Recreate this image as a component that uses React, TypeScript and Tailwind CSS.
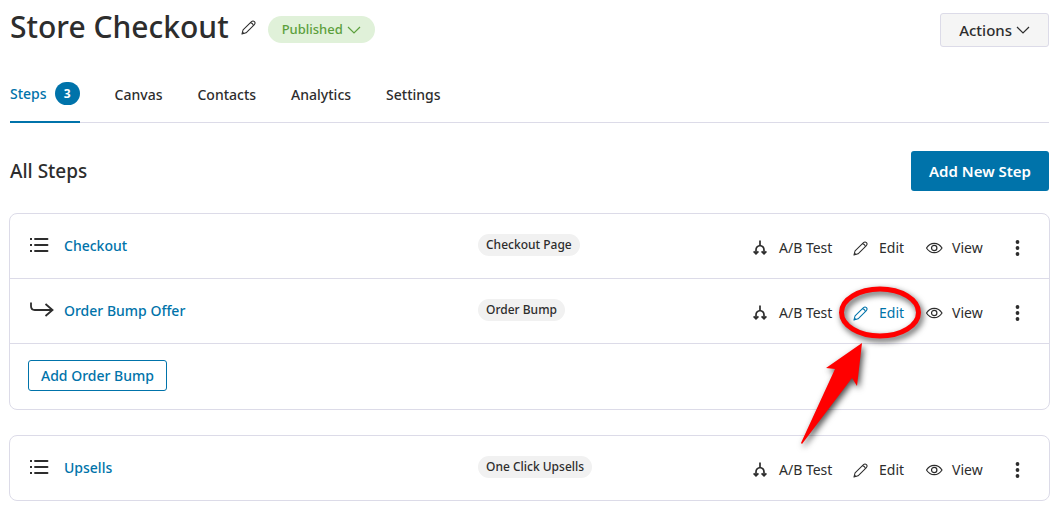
import { ReactNode } from "react";
import clsx from "clsx";

type Step = { name: string; badge: string; nested?: boolean };

const tabs = ["Canvas", "Contacts", "Analytics", "Settings"];

const checkoutSteps: Step[] = [
  { name: "Checkout", badge: "Checkout Page" },
  { name: "Order Bump Offer", badge: "Order Bump", nested: true },
];

const upsellSteps: Step[] = [{ name: "Upsells", badge: "One Click Upsells" }];

const PencilIcon = () => (
  <svg width="15" height="15" viewBox="0 0 16 16" fill="none" stroke="currentColor" strokeWidth="1.100" strokeLinejoin="round">
    <path d="M1 15 2.200 10.600 10.900 2C12 .9 13.300.7 14.300 1.700s.8 2.300-.3 3.400L5.400 13.700 1 15Z" />
    <path d="M10 2.900c1.700.1 2.900 1.200 3.200 3M1.600 13l1.700 1.500" />
  </svg>
);

const EyeIcon = () => (
  <svg width="17" height="12" viewBox="1 0 17 12" fill="none" stroke="currentColor" strokeWidth="1.200">
    <path d="M1.500 6C3.500 2.800 6 1.300 9.200 1.300S15 2.800 17 6c-2 3.200-4.600 4.700-7.800 4.700S3.500 9.200 1.500 6Z" />
    <circle cx="9.200" cy="6" r="2.700" />
  </svg>
);

const SplitIcon = () => (
  <svg width="14" height="16" viewBox="0 0 14 16" fill="none" stroke="currentColor" strokeWidth="1.700">
    <path d="M7 .5v5M3 13.500V10c0-2 1.500-4 4-4.500 2.500.5 4 2.500 4 4.500v3.500" />
    <path d="m.6 11.300 2.400 2.500 2.400-2.500M8.600 11.300l2.400 2.500 2.400-2.500" />
  </svg>
);

const ListIcon = () => (
  <svg width="20" height="16" viewBox="0 0 20 16" fill="none" stroke="currentColor" strokeWidth="1.900">
    <path d="M5 2h12.500M5 8h12.500M5 14h12.500" strokeLinecap="round" />
    <path d="M0 2h2M0 8h2M0 14h2" strokeWidth="2" />
  </svg>
);

const NestedIcon = () => (
  <svg width="25" height="16" viewBox="0 0 25 16" fill="none" stroke="currentColor" strokeWidth="1.800">
    <path d="M1 .5V4c0 2.500 1.300 4 3.800 4h18M15.500 2l7 6-7 6" />
  </svg>
);

const ChevronIcon = () => (
  <svg width="14" height="8" viewBox="0 0 14 8" fill="none" stroke="currentColor" strokeWidth="1.200">
    <path d="m1 1 6 6 6-6" />
  </svg>
);

const DotsIcon = () => (
  <svg width="5" height="16" viewBox="0 0 5 16" fill="currentColor">
    <circle cx="2.500" cy="2" r="1.900" />
    <circle cx="2.500" cy="8" r="1.900" />
    <circle cx="2.500" cy="14" r="1.900" />
  </svg>
);

// Red circle and arrow pinned over the Edit link
const Callout = () => (
  <svg
    className="pointer-events-none absolute -top-9 -left-16 z-10 text-[#ff0000]"
    width="150"
    height="186"
    viewBox="0 0 150 186"
    aria-hidden="true"
  >
    <g className="drop-shadow-[2px_3px_3px_rgba(0,0,0,0.7)]">
      <ellipse cx="91" cy="45.500" rx="38.500" ry="23.500" fill="none" stroke="currentColor" strokeWidth="5" />
      <path d="M73 76 37 101l9 1-34 74 1 1 50-66 5 8Z" fill="currentColor" />
    </g>
  </svg>
);

const Action = ({
  icon,
  label,
  className,
  children,
}: {
  icon: ReactNode;
  label: string;
  className?: string;
  children?: ReactNode;
}) => (
  <div className={clsx("relative", className)}>
    <a href="#" className="flex items-center">
      <span className="w-[26px]">{icon}</span>
      {label}
    </a>
    {children}
  </div>
);

const StepRow = ({ name, badge, nested }: Step) => (
  <div className="box-content flex h-[62px] items-center pr-[29px] pb-0.5 pl-5">
    <div className="flex w-[448px] shrink-0 items-center">
      <span className="w-[34px]">{nested ? <NestedIcon /> : <ListIcon />}</span>
      <a href="#" className="text-[14px] font-medium text-[#0073aa]">
        {name}
      </a>
    </div>
    <span className="h-[22px] rounded-full bg-[#f1f1f1] px-2 text-[12px] leading-[22px] font-medium">{badge}</span>
    <div className="ml-auto flex items-center pt-1.5 text-[14px] leading-5">
      <Action icon={<SplitIcon />} label="A/B Test" className="w-[100px]" />
      <Action icon={<PencilIcon />} label="Edit" className={clsx("w-[73px]", nested && "text-[#0073aa]")}>
        {nested && <Callout />}
      </Action>
      <Action icon={<EyeIcon />} label="View" className="w-[89px]" />
      <button aria-label={`More options for ${name}`}>
        <DotsIcon />
      </button>
    </div>
  </div>
);

const App = () => {
  return (
    <main className="bg-white px-2 pt-[7px] font-['Noto_Sans','Open_Sans',sans-serif] text-[#2d2d2d]">
      <div className="px-px pl-[2px]">
        <header className="flex items-center">
          <h1 className="text-[30px] leading-10 font-medium">Store Checkout</h1>
          <button aria-label="Rename" className="ml-3">
            <PencilIcon />
          </button>
          <button className="mt-1 ml-3 flex h-[27px] items-center gap-1 rounded-full bg-[#e0f1d9] px-[14px] pt-0.5 text-[13px] font-medium text-[#5ca03c]">
            Published
            <ChevronIcon />
          </button>
          <button className="mt-1.5 ml-auto flex h-[34px] items-center gap-1 rounded-[3px] border border-[#dcdbe8] bg-[#f5f5f5] px-[18px] text-[15px] font-medium">
            Actions
            <ChevronIcon />
          </button>
        </header>

        <nav className="mt-[19px] flex h-[57px] gap-[35px] border-b border-[#dcdbe8] text-[14px] font-medium">
          <a
            href="#"
            className="-mb-px flex items-center gap-2 border-b-2 border-[#0073aa] text-[#0073aa]"
          >
            Steps
            <span className="flex h-[23px] w-[25px] items-center justify-center rounded-full bg-[#0073aa] text-[12px] font-bold text-white">
              3
            </span>
          </a>
          {tabs.map((tab) => (
            <a key={tab} href="#" className="flex items-center">
              {tab}
            </a>
          ))}
        </nav>

        <div className="mt-7 flex items-center justify-between">
          <h2 className="text-[19px] font-medium">All Steps</h2>
          <button className="h-10 rounded-[3px] bg-[#0073aa] px-[18px] text-[15px] font-semibold text-white">
            Add New Step
          </button>
        </div>
      </div>

      <section className="mt-[22px] ml-px divide-y divide-[#dcdbe8] rounded-lg border border-[#dcdbe8]">
        {checkoutSteps.map((step) => (
          <StepRow key={step.name} {...step} />
        ))}
        <div className="flex h-[65px] items-center px-[18px] pb-0.5">
          <button className="h-[31px] rounded-[3px] border border-[#0073aa] px-3 text-[14px] font-medium text-[#0073aa]">
            Add Order Bump
          </button>
        </div>
      </section>

      <section className="mt-[25px] ml-px rounded-lg border border-[#dcdbe8]">
        {upsellSteps.map((step) => (
          <StepRow key={step.name} {...step} />
        ))}
      </section>
    </main>
  );
};

export default App;
